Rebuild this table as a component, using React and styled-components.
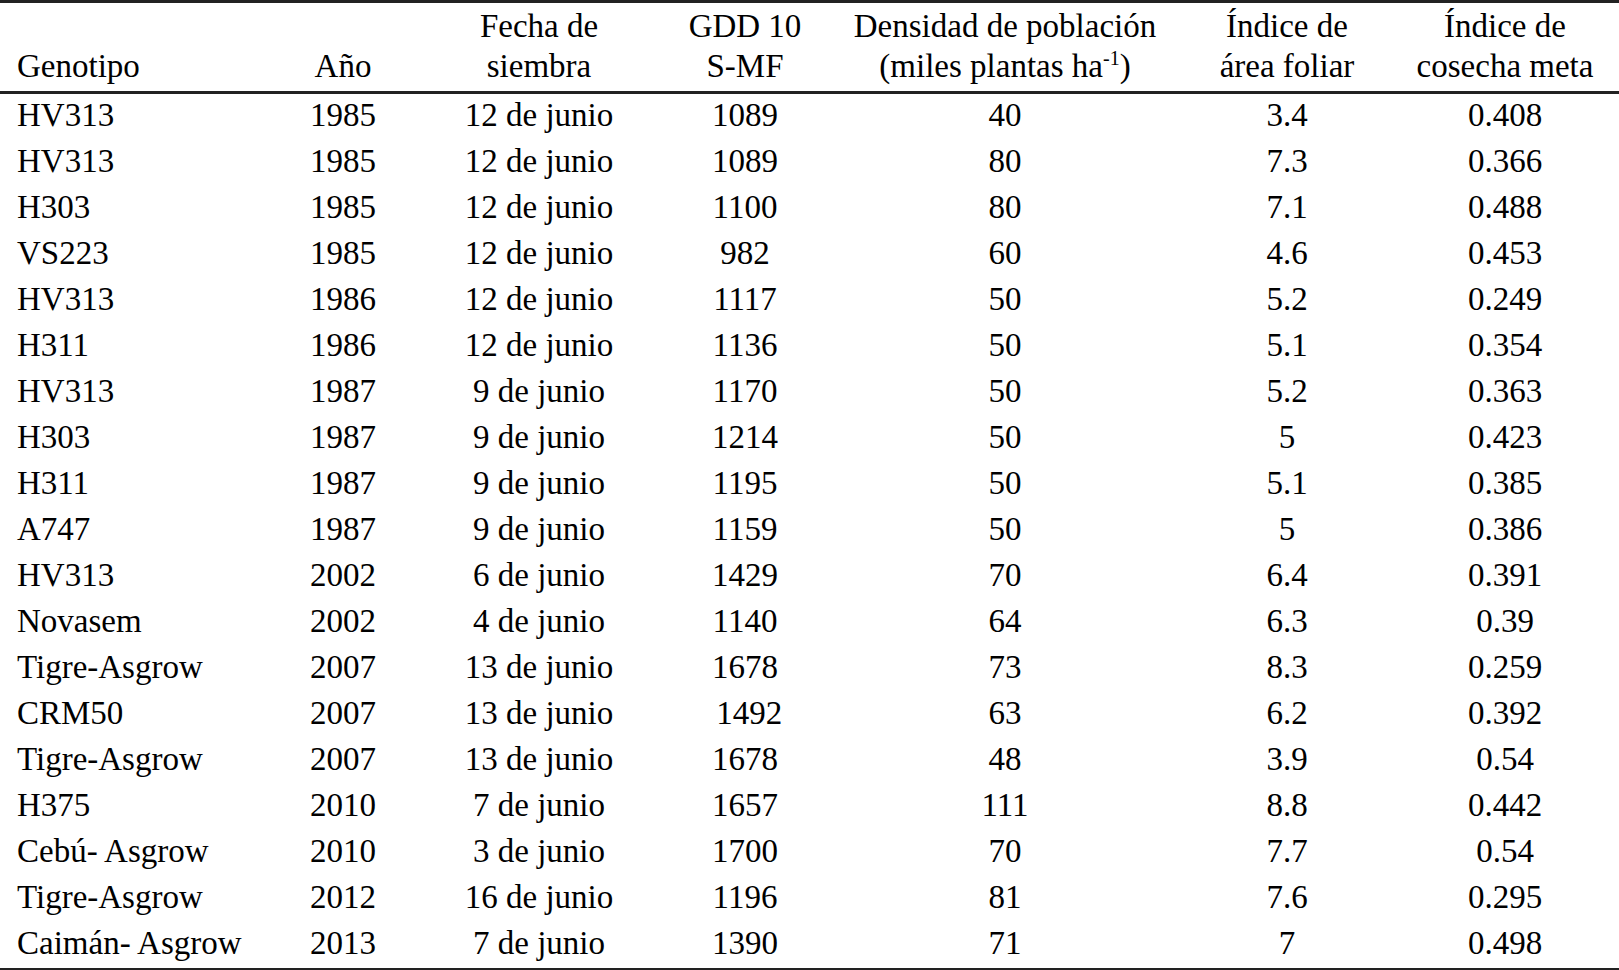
import styled, { createGlobalStyle } from 'styled-components';

const GlobalStyle = createGlobalStyle`
  html, body {
    margin: 0;
    padding: 0;
    background: #ffffff;
  }
  body {
    font-family: "Liberation Serif", "Times New Roman", serif;
    color: #000000;
  }
`;

const rows = [
  ['HV313', '1985', '12 de junio', '1089', '40', '3.4', '0.408'],
  ['HV313', '1985', '12 de junio', '1089', '80', '7.3', '0.366'],
  ['H303', '1985', '12 de junio', '1100', '80', '7.1', '0.488'],
  ['VS223', '1985', '12 de junio', '982', '60', '4.6', '0.453'],
  ['HV313', '1986', '12 de junio', '1117', '50', '5.2', '0.249'],
  ['H311', '1986', '12 de junio', '1136', '50', '5.1', '0.354'],
  ['HV313', '1987', '9 de junio', '1170', '50', '5.2', '0.363'],
  ['H303', '1987', '9 de junio', '1214', '50', '5', '0.423'],
  ['H311', '1987', '9 de junio', '1195', '50', '5.1', '0.385'],
  ['A747', '1987', '9 de junio', '1159', '50', '5', '0.386'],
  ['HV313', '2002', '6 de junio', '1429', '70', '6.4', '0.391'],
  ['Novasem', '2002', '4 de junio', '1140', '64', '6.3', '0.39'],
  ['Tigre-Asgrow', '2007', '13 de junio', '1678', '73', '8.3', '0.259'],
  ['CRM50', '2007', '13 de junio', '\u00a01492', '63', '6.2', '0.392'],
  ['Tigre-Asgrow', '2007', '13 de junio', '1678', '48', '3.9', '0.54'],
  ['H375', '2010', '7 de junio', '1657', '111', '8.8', '0.442'],
  ['Cebú- Asgrow', '2010', '3 de junio', '1700', '70', '7.7', '0.54'],
  ['Tigre-Asgrow', '2012', '16 de junio', '1196', '81', '7.6', '0.295'],
  ['Caimán- Asgrow', '2013', '7 de junio', '1390', '71', '7', '0.498'],
];

// column widths chosen so the centred columns land where the printed table has them
const columns = [260, 166, 226, 186, 334, 230, 217];

export default function App() {
  return (
    <>
      <GlobalStyle />
      <Table>
        <colgroup>
          {columns.map((w, i) => (
            <col key={i} style={{ width: w }} />
          ))}
        </colgroup>
        <thead>
          <tr>
            <Head $align="left">Genotipo</Head>
            <Head>Año</Head>
            <Head>
              Fecha de
              <br />
              siembra
            </Head>
            <Head>
              GDD 10
              <br />
              S-MF
            </Head>
            <Head>
              Densidad de población
              <br />
              (miles plantas ha<Sup>-1</Sup>)
            </Head>
            <Head>
              Índice de
              <br />
              área foliar
            </Head>
            <Head $last>
              Índice de
              <br />
              cosecha meta
            </Head>
          </tr>
        </thead>
        <tbody>
          {rows.map((r, i) => (
            <Row key={i}>
              <Cell $align="left">{r[0]}</Cell>
              <Cell>{r[1]}</Cell>
              <Cell>{r[2]}</Cell>
              <Cell>{r[3]}</Cell>
              <Cell>{r[4]}</Cell>
              <Cell>{r[5]}</Cell>
              <Cell $last>{r[6]}</Cell>
            </Row>
          ))}
        </tbody>
      </Table>
    </>
  );
}

const Table = styled.table`
  width: 1619px;
  table-layout: fixed;
  border-collapse: collapse;
  border-top: 3px solid #222;
  border-bottom: 3px solid #222;
  font-family: "Liberation Serif", "Times New Roman", serif;
  font-size: 33px;
  color: #000;
`;

const Head = styled.th`
  font-family: "Liberation Serif", "Times New Roman", serif;
  font-weight: normal;
  vertical-align: bottom;
  line-height: 40px;
  padding: 3px ${(p) => (p.$last ? '11px' : '0')} 5px ${(p) => (p.$align === 'left' ? '17px' : '0')};
  text-align: ${(p) => p.$align || 'center'};
  border-bottom: 3px solid #222;
  white-space: nowrap;
`;

const Sup = styled.sup`
  font-size: 20px;
  line-height: 0;
  vertical-align: 12px;
`;

const Row = styled.tr`
  height: 46px;
`;

const Cell = styled.td`
  font-family: "Liberation Serif", "Times New Roman", serif;
  line-height: 42px;
  padding: 0 ${(p) => (p.$last ? '11px' : '0')} 4px ${(p) => (p.$align === 'left' ? '17px' : '0')};
  text-align: ${(p) => p.$align || 'center'};
  white-space: nowrap;
`;
